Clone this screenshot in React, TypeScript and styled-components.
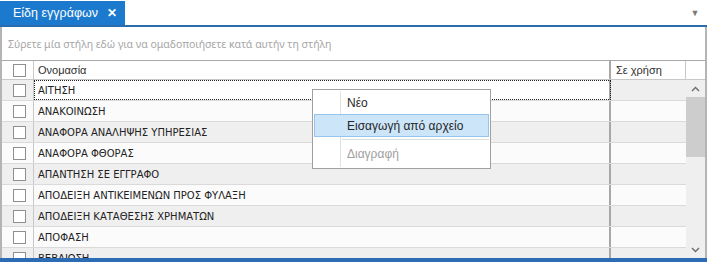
import React from "react";
import styled, { createGlobalStyle } from "styled-components";

const Global = createGlobalStyle`
  html, body { margin: 0; padding: 0; background: #ffffff; }
  body { width: 707px; height: 262px; overflow: hidden; }
  * { box-sizing: border-box; }
`;

const Page = styled.div`
  position: relative;
  width: 707px;
  height: 262px;
  display: flex;
  flex-direction: column;
  font-family: "Noto Sans", "Open Sans", sans-serif;
`;

const TabStrip = styled.div`
  height: 27px;
  display: flex;
  align-items: stretch;
  border-bottom: 2px solid #2b6cae;
`;

const Tab = styled.div`
  width: 125px;
  margin-top: 1px;
  background: #1c7ace;
  color: #ffffff;
  display: flex;
  align-items: center;
  padding-left: 13px;
  gap: 9px;
  font-family: "Liberation Sans", Arial, sans-serif;
  font-size: 12.5px;
`;

const CloseX = styled.span`
  font-size: 12px;
  font-weight: 700;
  line-height: 1;
`;

const Spacer = styled.div`
  flex: 1;
`;

const TabMenuArrow = styled.div`
  width: 24px;
  display: flex;
  align-items: center;
  justify-content: center;
  color: #7a7a7a;
  font-size: 9px;
`;

const Panel = styled.div`
  flex: 1;
  display: flex;
  flex-direction: column;
  border-left: 2px solid #b4b4b4;
  border-right: 2px solid #b4b4b4;
  min-height: 0;
`;

const GroupPanel = styled.div`
  height: 34px;
  display: flex;
  align-items: center;
  padding-left: 6px;
  color: #a6a6a6;
  font-size: 10.5px;
  border-bottom: 1px solid #a8a8a8;
`;

const HeaderRow = styled.div`
  height: 19px;
  display: flex;
  border-bottom: 1px solid #c8c8c8;
  font-family: "Liberation Sans", Arial, sans-serif;
  font-size: 11px;
  color: #303030;
`;

const CheckCell = styled.div<{ $bg?: string }>`
  width: 32px;
  flex: none;
  display: flex;
  align-items: center;
  justify-content: center;
  border-right: 1px solid #c8c8c8;
  background: ${(p) => p.$bg || "transparent"};
`;

const Box = styled.div`
  width: 13px;
  height: 13px;
  border: 1px solid #8f8f8f;
  background: #ffffff;
  margin-left: 3px;
`;

const NameHead = styled.div`
  flex: 1;
  display: flex;
  align-items: center;
  padding-left: 4px;
  border-right: 2px solid #a8a8a8;
`;

const UseHead = styled.div`
  width: 75px;
  display: flex;
  align-items: center;
  padding-left: 5px;
  border-right: 1px solid #c8c8c8;
`;

const HeadFill = styled.div`
  width: 19px;
`;

const Body = styled.div`
  flex: 1;
  display: flex;
  min-height: 0;
  overflow: hidden;
`;

const Rows = styled.div`
  flex: 1;
  display: flex;
  flex-direction: column;
  overflow: hidden;
`;

const Row = styled.div<{ $alt: boolean }>`
  height: 21px;
  flex: none;
  display: flex;
  border-bottom: 1px solid #dadada;
  background: ${(p) => (p.$alt ? "#efefef" : "#fbfbfb")};
  font-family: "DejaVu Sans", Verdana, sans-serif;
  font-size: 10px;
  color: #222222;
`;

const NameCell = styled.div<{ $focus?: boolean }>`
  flex: 1;
  display: flex;
  align-items: center;
  padding-left: 4px;
  padding-top: 1px;
  border-right: 2px solid #a8a8a8;
  background: ${(p) => (p.$focus ? "#ffffff" : "transparent")};
  outline: ${(p) => (p.$focus ? "1px dotted #202020" : "none")};
  outline-offset: -1px;
`;

const UseCell = styled.div`
  width: 75px;
`;

const ScrollBar = styled.div`
  width: 19px;
  flex: none;
  background: #efefef;
  display: flex;
  flex-direction: column;
  align-items: stretch;
`;

const ScrollBtn = styled.div`
  height: 17px;
  display: flex;
  align-items: center;
  justify-content: center;
`;

const Thumb = styled.div`
  height: 60px;
  background: #cdcdcd;
`;

const BottomBar = styled.div`
  height: 4px;
  background: #2b6cb4;
`;

const Menu = styled.div`
  position: absolute;
  left: 312px;
  top: 89px;
  width: 179px;
  height: 80px;
  background: #ffffff;
  border: 1px solid #a0a0a0;
  padding: 1px;
  display: flex;
  flex-direction: column;
  font-family: "Liberation Sans", Arial, sans-serif;
  font-size: 12px;
  color: #262626;
  &::before {
    content: "";
    position: absolute;
    left: 27px;
    top: 1px;
    bottom: 1px;
    width: 1px;
    background: #e2e2e2;
  }
`;

const MenuItem = styled.div<{ $hover?: boolean; $disabled?: boolean }>`
  position: relative;
  height: 23px;
  display: flex;
  align-items: center;
  padding-left: 32px;
  border: 1px solid ${(p) => (p.$hover ? "#97c4ea" : "transparent")};
  background: ${(p) => (p.$hover ? "#cde5f8" : "transparent")};
  color: ${(p) => (p.$disabled ? "#a0a0a0" : "#262626")};
  z-index: 1;
`;

const MenuSep = styled.div`
  height: 1px;
  margin: 2px 0 2px 28px;
  background: #dcdcdc;
`;

const Chevron = ({ up }: { up?: boolean }) => (
  <svg width="9" height="6" viewBox="0 0 9 6">
    <path
      d={up ? "M1 5 L4.5 1.5 L8 5" : "M1 1 L4.5 4.5 L8 1"}
      fill="none"
      stroke="#6a6a6a"
      strokeWidth="1.4"
    />
  </svg>
);

const items = [
  "ΑΙΤΗΣΗ",
  "ΑΝΑΚΟΙΝΩΣΗ",
  "ΑΝΑΦΟΡΑ ΑΝΑΛΗΨΗΣ ΥΠΗΡΕΣΙΑΣ",
  "ΑΝΑΦΟΡΑ ΦΘΟΡΑΣ",
  "ΑΠΑΝΤΗΣΗ ΣΕ ΕΓΓΡΑΦΟ",
  "ΑΠΟΔΕΙΞΗ ΑΝΤΙΚΕΙΜΕΝΩΝ ΠΡΟΣ ΦΥΛΑΞΗ",
  "ΑΠΟΔΕΙΞΗ ΚΑΤΑΘΕΣΗΣ ΧΡΗΜΑΤΩΝ",
  "ΑΠΟΦΑΣΗ",
  "ΒΕΒΑΙΩΣΗ",
];

export default function App() {
  return (
    <Page>
      <Global />
      <TabStrip>
        <Tab>
          <span>Είδη εγγράφων</span>
          <CloseX>✕</CloseX>
        </Tab>
        <Spacer />
        <TabMenuArrow>▼</TabMenuArrow>
      </TabStrip>
      <Panel>
        <GroupPanel>Σύρετε μία στήλη εδώ για να ομαδοποιήσετε κατά αυτήν τη στήλη</GroupPanel>
        <HeaderRow>
          <CheckCell>
            <Box />
          </CheckCell>
          <NameHead>Ονομασία</NameHead>
          <UseHead>Σε χρήση</UseHead>
          <HeadFill />
        </HeaderRow>
        <Body>
          <Rows>
            {items.map((name, i) => (
              <Row key={name} $alt={i % 2 === 0}>
                <CheckCell>
                  <Box />
                </CheckCell>
                <NameCell $focus={i === 0}>{name}</NameCell>
                <UseCell />
              </Row>
            ))}
          </Rows>
          <ScrollBar>
            <ScrollBtn>
              <Chevron up />
            </ScrollBtn>
            <Thumb />
            <Spacer />
            <ScrollBtn>
              <Chevron />
            </ScrollBtn>
          </ScrollBar>
        </Body>
      </Panel>
      <BottomBar />
      <Menu>
        <MenuItem>Νέο</MenuItem>
        <MenuItem $hover>Εισαγωγή από αρχείο</MenuItem>
        <MenuSep />
        <MenuItem $disabled>Διαγραφή</MenuItem>
      </Menu>
    </Page>
  );
}
